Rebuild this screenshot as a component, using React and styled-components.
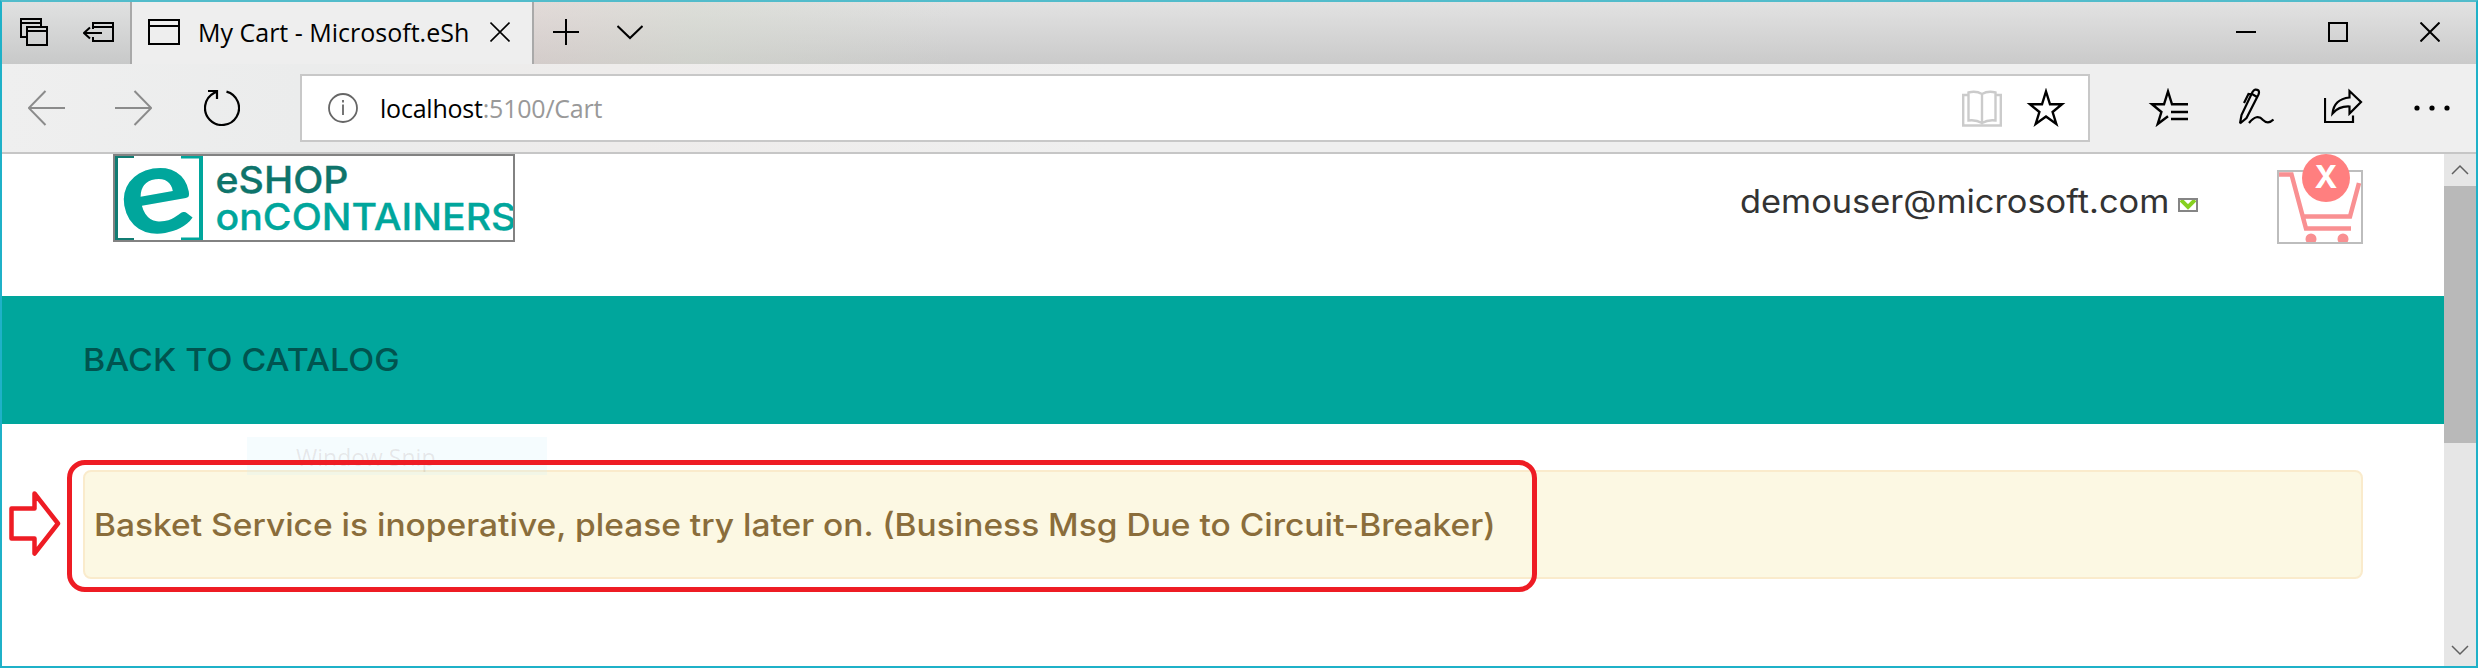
import React from "react";
import styled, { createGlobalStyle } from "styled-components";

const Global = createGlobalStyle`
  *, *::before, *::after { box-sizing: border-box; }
  body { margin: 0; background: #fff; }
`;

const uiFont = `"Open Sans", "Noto Sans", sans-serif`;
const siteFont = `Inter, "Liberation Sans", sans-serif`;

const Window = styled.div`
  position: relative;
  display: flex;
  flex-direction: column;
  width: 2478px;
  height: 668px;
  overflow: hidden;
  border: 2px solid #1fb1c8;
  border-top-color: #52bccb;
  background: #fff;
`;

const TitleBar = styled.div`
  display: flex;
  flex: none;
  height: 62px;
  background: linear-gradient(180deg, #e2e2e2, #cacaca);
`;

const TabTools = styled.div`
  display: flex;
  width: 130px;
  padding: 16px 0 0 18px;
  gap: 35px;
  border-right: 2px solid #a9a9a9;
  background: linear-gradient(180deg, #e0e1e1, #c8c9c9);
`;

const Tab = styled.div`
  display: flex;
  align-items: center;
  width: 402px;
  padding: 0 0 3px 16px;
  border-right: 2px solid #a9a9a9;
  background: #eeeeee;
`;

const TabTitle = styled.span`
  width: 271px;
  margin-left: 18px;
  margin-right: 21px;
  font: 400 25px/36px ${uiFont};
  color: #000;
  white-space: nowrap;
`;

const NewTabArea = styled.div`
  display: flex;
  align-items: center;
  gap: 38px;
  flex: 1;
  padding: 0 0 2px 19px;
  background: linear-gradient(90deg, rgba(226, 208, 203, 0.4), rgba(214, 218, 206, 0.45) 160px, rgba(216, 216, 216, 0) 420px);
`;

const WindowButtons = styled.div`
  display: flex;
  align-items: center;
  gap: 72px;
  padding: 0 36px 2px 0;
`;

const Toolbar = styled.div`
  display: flex;
  align-items: center;
  flex: none;
  height: 90px;
  padding: 0 25px 0 26px;
  border-bottom: 2px solid #c6c6c6;
  background: linear-gradient(90deg, #efefef, #ebecec 12%, #eeeceb 25%, #efefef 45%);
`;

const NavButtons = styled.div`
  display: flex;
  align-items: center;
  flex: none;
  gap: 50px;
  width: 272px;
`;

const AddressBar = styled.div`
  display: flex;
  align-items: center;
  flex: none;
  width: 1790px;
  height: 68px;
  padding: 0 22px 0 26px;
  border: 2px solid #c8c8c8;
  background: #fff;
`;

const Url = styled.span`
  flex: 1;
  margin-left: 22px;
  font: 400 25px/34px ${uiFont};
  letter-spacing: -0.22px;
  color: #000;
  em { font-style: normal; color: #999; }
`;

const AddressActions = styled.div`
  display: flex;
  align-items: center;
  gap: 24px;
`;

const ToolActions = styled.div`
  display: flex;
  align-items: center;
  gap: 50px;
  margin-left: 58px;
`;

const Viewport = styled.div`
  display: flex;
  flex: 1;
  min-height: 0;
`;

const Page = styled.main`
  flex: 1;
  font-family: ${siteFont};
`;

const SiteHeader = styled.header`
  display: flex;
  height: 142px;
  padding: 0 81px 0 111px;
`;

const Logo = styled.div`
  width: 402px;
  height: 88px;
  border: 2px solid #828282;
  overflow: hidden;
  svg { display: block; }
`;

const Identity = styled.div`
  display: flex;
  align-items: flex-start;
  margin-left: auto;
  padding-top: 28px;
`;

/* The site face is a wide geometric sans, so each text is stretched a little. */
const WideText = styled.span`
  display: block;
  font-size: ${(p) => p.$size || 31}px;
  font-weight: ${(p) => p.$weight || 500};
  line-height: 40px;
  color: ${(p) => p.$color};
  white-space: nowrap;
  transform: scaleX(${(p) => p.$stretch});
  transform-origin: 0 50%;
`;

const UserName = styled.div`
  width: 438px;
`;

const MenuMark = styled.span`
  width: 20px;
  height: 14px;
  margin-top: 16px;
  border: 2px solid #858585;
  svg { display: block; }
`;

const CartLink = styled.div`
  position: relative;
  width: 86px;
  height: 74px;
  margin: 16px 0 0 79px;
  border: 2px solid #bdbdbd;
  svg { display: block; }
`;

const CartBadge = styled.span`
  position: absolute;
  top: -18px;
  left: 23px;
  width: 48px;
  height: 48px;
  border-radius: 50%;
  background: #ff7f7f;
  color: #fff;
  font-weight: 700;
  font-size: 31px;
  line-height: 45px;
  text-align: center;
`;

const CatalogBar = styled.nav`
  display: flex;
  align-items: center;
  height: 128px;
  padding-left: 81px;
  background: #00a69c;
`;

const Content = styled.section`
  position: relative;
  padding: 46px 81px 0;
`;

const Alert = styled.div`
  display: flex;
  align-items: center;
  height: 109px;
  padding-left: 9px;
  border: 2px solid #faebcc;
  border-radius: 8px;
  background: #fcf8e3;
`;

const SnipGhost = styled.div`
  position: absolute;
  top: 13px;
  left: 245px;
  width: 300px;
  height: 38px;
  padding-left: 49px;
  background: rgba(205, 238, 248, 0.2);
  font: 400 23px/40px ${uiFont};
  color: rgba(120, 90, 90, 0.13);
`;

const Highlight = styled.div`
  position: absolute;
  top: 36px;
  left: 65px;
  width: 1470px;
  height: 132px;
  border: 5px solid #ee1c24;
  border-radius: 18px;
`;

const Pointer = styled.svg`
  position: absolute;
  top: 66px;
  left: 6px;
`;

const ScrollBar = styled.div`
  display: flex;
  flex-direction: column;
  width: 32px;
  background: #e6e6e6;
`;

const ScrollButton = styled.div`
  height: 32px;
  svg { display: block; }
`;

const ScrollThumb = styled.div`
  height: 257px;
  margin-bottom: auto;
  background: #b9b9b9;
`;

const Glyph = styled.svg`
  flex: none;
  margin-left: ${(p) => p.$ml || 0}px;
`;

const Icon = ({ box, color = "#000", sw = 2, ml, children }) => {
  const [, , w, h] = box.split(" ");
  return (
    <Glyph $ml={ml} width={w} height={h} viewBox={box} fill="none" stroke={color} strokeWidth={sw}>
      {children}
    </Glyph>
  );
};

const starPath = "M2046 91.5L2050 104.3H2062L2052.6 112L2056.3 124L2046 116.5L2035.7 124L2039.4 112L2030 104.3H2042Z";

export default function App() {
  return (
    <Window>
      <Global />
      <TitleBar>
        <TabTools>
          <Icon box="20 18 28 28"><path d="M26 37H21V19H41V26M21 23H41M27 27H47V45H27ZM27 31H47" /></Icon>
          <Icon box="83 18 31 28"><path d="M93 29V23H113V41H93V37M93 27H113M102 33H84M90 27.500L84 33L90 38.500" /></Icon>
        </TabTools>
        <Tab>
          <Icon box="148 18 32 26"><path d="M149 19H179V43H149ZM149 25H179" /></Icon>
          <TabTitle>My Cart - Microsoft.eSh</TabTitle>
          <Icon box="490 21 20 21" sw={1.6}><path d="M490.500 22.500L509.500 41.500M509.500 22.500L490.500 41.500" /></Icon>
        </Tab>
        <NewTabArea>
          <Icon box="553 19 26 26"><path d="M553 32H579M566 19V45" /></Icon>
          <Icon box="617 19 26 26"><path d="M617.500 26L630 38L642.500 26" /></Icon>
        </NewTabArea>
        <WindowButtons>
          <Icon box="2236 22 20 20"><path d="M2236 32H2256" /></Icon>
          <Icon box="2328 22 20 20"><path d="M2329 23H2347V41H2329Z" /></Icon>
          <Icon box="2420 22 20 20"><path d="M2420.500 22.500L2439.500 41.500M2439.500 22.500L2420.500 41.500" /></Icon>
        </WindowButtons>
      </TitleBar>
      <Toolbar>
        <NavButtons>
          <Icon box="28 90 37 36" color="#8b8b8b"><path d="M65 108H29M45.500 91L28.800 108L45.500 125" /></Icon>
          <Icon box="115 90 37 36" color="#8b8b8b"><path d="M115 108H151M134.500 91L151.200 108L134.500 125" /></Icon>
          <Icon box="204 90 36 36" sw={2.2} ml={2}><path d="M226.500 91.600A17 17 0 1 1 214 93L217 91.500M208 91H217V99" /></Icon>
        </NavButtons>
        <AddressBar>
          <Icon box="328 93 30 30" color="#666" sw={1.8}>
            <circle cx="343" cy="108" r="14" /><path d="M343 104.500V115M343 100V102.500" />
          </Icon>
          <Url>localhost<em>:5100/Cart</em></Url>
          <AddressActions>
            <Icon box="1962 89 40 38" color="#cbcbcb" sw={2.4}>
              <path d="M1968 95H1963.200V125.500H2000.800V95H1996M1982 94Q1976 90.500 1968.500 92.500V120.500Q1976 119.500 1982 123Q1988 119.500 1995.500 120.500V92.500Q1988 90.500 1982 94V123" />
            </Icon>
            <Icon box="2026 88 40 40" sw={2.4}><path d={starPath} /></Icon>
          </AddressActions>
        </AddressBar>
        <ToolActions>
          <Icon box="2148 88 40 40" sw={2.4}>
            <path d="M2188 104.300H2172L2168 91.500L2164 104.300H2152L2161.400 112L2157.700 124L2168 116.200M2171 112H2188M2171 119H2188" />
          </Icon>
          <Icon box="2238 88 36 40" sw={2.2}>
            <path d="M2240 123.500L2241.500 115L2252.500 92Q2255 88 2258.500 90.500Q2259.500 92 2258.500 94.500L2246.500 118L2240 123.500M2244 103L2248.500 94L2253 94.500L2257 97M2249 123Q2257 113 2263 120Q2268 125 2273.500 119.500" />
          </Icon>
          <Icon box="2324 88 39 40" sw={2.2}>
            <path d="M2325 98V122H2353V115.500M2332.500 113.500Q2334 99 2349.500 97.500V91L2361 102L2349.500 113.500V106.500Q2339 106 2332.500 113.500Z" />
          </Icon>
          <Icon box="2413 88 38 40" color="none">
            <g fill="#000"><circle cx="2417" cy="108" r="2.600" /><circle cx="2432" cy="108" r="2.600" /><circle cx="2447" cy="108" r="2.600" /></g>
          </Icon>
        </ToolActions>
      </Toolbar>
      <Viewport>
        <Page>
          <SiteHeader>
            <Logo>
              <svg width="398" height="84" viewBox="2 2 398 84" fontFamily={siteFont}>
                <path d="M21 2.500H3.500V85.500H21" fill="none" stroke="#117c73" strokeWidth="3" />
                <path d="M68 2.500H88V85.500H68" fill="none" stroke="#00a69c" strokeWidth="4" />
                <text x="6" y="79" fontSize="124" fontWeight="700" fontFamily="Lato, sans-serif" textLength="75" lengthAdjust="spacingAndGlyphs" fill="#00a69c" transform="rotate(-10 44 45)">e</text>
                <text x="102.500" y="38.700" fontSize="37" fontWeight="500" textLength="133" lengthAdjust="spacingAndGlyphs" fill="#0e746b" stroke="#0e746b" strokeWidth="0.300">eSHOP</text>
                <text x="102.500" y="75.700" fontSize="37" fontWeight="500" textLength="301" lengthAdjust="spacingAndGlyphs" fill="#00a69c" stroke="#00a69c" strokeWidth="0.300">onCONTAINERS</text>
              </svg>
            </Logo>
            <Identity>
              <UserName><WideText $size={32} $weight={400} $color="#333" $stretch={1.074}>demouser@microsoft.com</WideText></UserName>
              <MenuMark>
                <svg width="16" height="10" viewBox="0 0 16 10" fill="none" stroke="#86d01f" strokeWidth="4"><path d="M1 0L8 7L15 0" /></svg>
              </MenuMark>
            </Identity>
            <CartLink>
              <svg width="82" height="70" viewBox="2 2 82 70" fill="none" stroke="#f99092" strokeWidth="4.500">
                <path d="M2 4.500H14.500L29 58.500H74M26 46.500H73L82 13" />
                <g fill="#f99092" stroke="none"><circle cx="34" cy="69" r="5.500" /><circle cx="66" cy="69" r="5.500" /></g>
              </svg>
              <CartBadge>X</CartBadge>
            </CartLink>
          </SiteHeader>
          <CatalogBar><WideText as="a" $color="#00544f" $stretch={1.094}>BACK TO CATALOG</WideText></CatalogBar>
          <Content>
            <Alert>
              <WideText $color="#8a6d3b" $stretch={1.081}>Basket Service is inoperative, please try later on. (Business Msg Due to Circuit-Breaker)</WideText>
            </Alert>
            <SnipGhost>Window Snip</SnipGhost>
            <Highlight />
            <Pointer width="56" height="68" viewBox="8 490 56 68" fill="none" stroke="#ee1c24" strokeWidth="4.500" strokeLinejoin="round">
              <path d="M11.500 508.500H34.500V493.500L58 523.500L34.500 553.500V538.500H11.500Z" />
            </Pointer>
          </Content>
        </Page>
        <ScrollBar>
          <ScrollButton><Icon box="2444 154 32 32" color="#606060" sw={1.5}><path d="M2452 174L2460 166L2468 174" /></Icon></ScrollButton>
          <ScrollThumb />
          <ScrollButton><Icon box="2444 634 32 32" color="#606060" sw={1.5}><path d="M2452 646L2460 654L2468 646" /></Icon></ScrollButton>
        </ScrollBar>
      </Viewport>
    </Window>
  );
}
